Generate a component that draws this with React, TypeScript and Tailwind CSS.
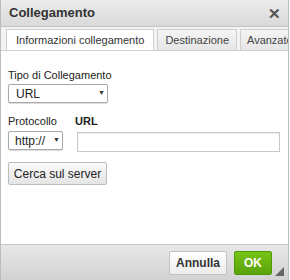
import React from 'react';

const font = { fontFamily: '"Liberation Sans", Arial, sans-serif' };

export default function App() {
  return (
    <div className="w-[290px] h-[280px] bg-white" style={font}>
      <div className="relative w-[289px] h-[280px] border-x border-[#bcbcbc] flex flex-col">
        {/* title bar */}
        <div className="h-[27px] shrink-0 flex items-center justify-between pl-[8px] pr-[7px] bg-gradient-to-b from-[#ececec] to-[#d9d9d9] border-b border-[#c4c4c4]">
          <span className="text-[13px] font-bold text-[#333]">Collegamento</span>
          <span className="text-[15px] font-bold text-[#555] leading-none">✕</span>
        </div>

        {/* tabs */}
        <div className="h-[24px] shrink-0 flex items-end gap-[3px] pl-[5px] bg-[#f3f3f3] border-b border-[#cfcfcf] overflow-hidden">
          <div className="h-[22px] px-[9px] flex items-center bg-white border border-b-0 border-[#cfcfcf] text-[11px] text-[#333] -mb-px whitespace-nowrap">
            Informazioni collegamento
          </div>
          <div className="h-[21px] px-[7px] flex items-center bg-gradient-to-b from-[#f4f4f4] to-[#e6e6e6] border border-b-0 border-[#cfcfcf] text-[11px] text-[#444] whitespace-nowrap">
            Destinazione
          </div>
          <div className="h-[21px] px-[6px] flex items-center bg-gradient-to-b from-[#f4f4f4] to-[#e6e6e6] border border-b-0 border-[#cfcfcf] text-[11px] text-[#444] whitespace-nowrap">
            Avanzate
          </div>
        </div>

        {/* content */}
        <div className="flex-1 bg-white px-[7px] pt-[17px] text-[11px] text-[#222]">
          <div className="leading-[15px]">Tipo di Collegamento</div>
          <div className="mt-[1px] w-[100px] h-[19px] border border-[#a9a9a9] rounded-[2px] bg-white flex items-center justify-between pl-[7px] pr-[2px] shadow-[0_1px_1px_rgba(0,0,0,0.15)] text-[12px]">
            <span>URL</span>
            <span className="text-[7px] text-[#333]">▼</span>
          </div>

          <div className="mt-[11px] flex gap-[12px]">
            <div className="flex flex-col">
              <span className="leading-[15px]">Protocollo</span>
              <div className="mt-[2px] w-[55px] h-[19px] border border-[#a9a9a9] rounded-[2px] bg-white flex items-center justify-between pl-[6px] pr-[2px] shadow-[0_1px_1px_rgba(0,0,0,0.15)] text-[12px]">
                <span>http://</span>
                <span className="text-[7px] text-[#333]">▼</span>
              </div>
            </div>
            <div className="flex flex-col flex-1 pr-[1px]">
              <span className="leading-[15px] font-bold">URL</span>
              <div className="mt-[3px] ml-[2px] h-[20px] border border-[#c8c8c8] bg-white shadow-[inset_0_1px_1px_rgba(0,0,0,0.08)]" />
            </div>
          </div>

          <div className="mt-[10px] w-[99px] h-[23px] flex items-center justify-center border border-[#bdbdbd] rounded-[2px] bg-gradient-to-b from-[#fafafa] to-[#e5e5e5] text-[12px] text-[#222]">
            Cerca sul server
          </div>
        </div>

        {/* footer */}
        <div className="relative h-[36px] shrink-0 bg-gradient-to-b from-[#e8e8e8] to-[#d2d2d2] border-t border-[#c8c8c8] flex items-center justify-end gap-[7px] pr-[16px]">
          <div className="h-[24px] w-[58px] flex items-center justify-center border border-[#c3c3c3] rounded-[2px] bg-gradient-to-b from-[#ffffff] to-[#ececec] text-[12px] font-bold text-[#333]">
            Annulla
          </div>
          <div className="h-[24px] w-[38px] flex items-center justify-center border border-[#4e9a06] rounded-[2px] bg-gradient-to-b from-[#78c416] to-[#5aa20a] text-[12px] font-bold text-white">
            OK
          </div>
          <svg className="absolute right-[4px] bottom-[4px]" width="9" height="9" viewBox="0 0 9 9">
            <polygon points="9,0 9,9 0,9" fill="#666" />
          </svg>
        </div>
      </div>
    </div>
  );
}
